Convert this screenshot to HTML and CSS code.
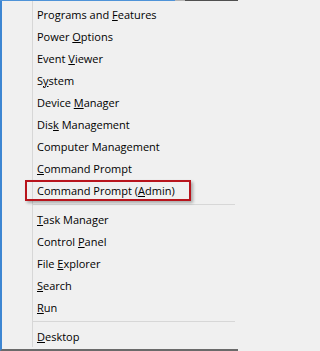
FILE: index.html
```html
<!DOCTYPE html>
<html>
<head>
<meta charset="utf-8">
<link rel="stylesheet" href="styles.css">
</head>
<body>
<div class="topedge"></div>
<div class="menu">
  <div class="item">Programs and <u>F</u>eatures</div>
  <div class="item">Power <u>O</u>ptions</div>
  <div class="item">Event <u>V</u>iewer</div>
  <div class="item">S<u>y</u>stem</div>
  <div class="item">Device <u>M</u>anager</div>
  <div class="item">Dis<u>k</u> Management</div>
  <div class="item">Computer Mana<u>g</u>ement</div>
  <div class="item"><u>C</u>ommand Prompt</div>
  <div class="item item-marked">Command Prompt (<u>A</u>dmin)</div>
  <div class="sep"></div>
  <div class="item"><u>T</u>ask Manager</div>
  <div class="item">Control <u>P</u>anel</div>
  <div class="item">File <u>E</u>xplorer</div>
  <div class="item"><u>S</u>earch</div>
  <div class="item"><u>R</u>un</div>
  <div class="sep"></div>
  <div class="item"><u>D</u>esktop</div>
</div>
</body>
</html>
```
FILE: styles.css
```css
html, body {
  margin: 0;
  padding: 0;
  background: #f0f0f0;
}
body {
  width: 238px;
  height: 351px;
  overflow: hidden;
  font-family: "Open Sans", "Noto Sans", sans-serif;
  font-size: 11px;
  color: #000;
}
.topedge {
  height: 1px;
  background: linear-gradient(to right, #4f93d8 0, #4f93d8 175px, #b4b4b4 175px, #b4b4b4 185px, #505050 185px);
}
.menu {
  display: flex;
  flex-direction: column;
  height: 350px;
  box-sizing: border-box;
  padding: 3px 0 1px 0;
  border-left: 2px solid #3d86d2;
  border-bottom: 2px solid #6a6a6a;
  background: #f0f0f0 linear-gradient(#d7d7d7, #d7d7d7) 30px 0 / 1px calc(100% - 2px) no-repeat;
}
.item {
  position: relative;
  height: 22px;
  line-height: 22px;
  padding-left: 35px;
  white-space: nowrap;
}
.item u {
  text-decoration: underline;
  text-underline-offset: 1px;
}
.item-marked::after {
  content: "";
  position: absolute;
  left: 23px;
  top: 0;
  width: 162px;
  height: 17px;
  border: 2px solid #b8141c;
  box-shadow: 2px 2px 3px rgba(0, 0, 0, 0.3);
}
.sep {
  height: 7px;
  margin-left: 31px;
  margin-right: 3px;
  background: linear-gradient(#d7d7d7, #d7d7d7) 0 2px / 100% 1px no-repeat;
}
```
